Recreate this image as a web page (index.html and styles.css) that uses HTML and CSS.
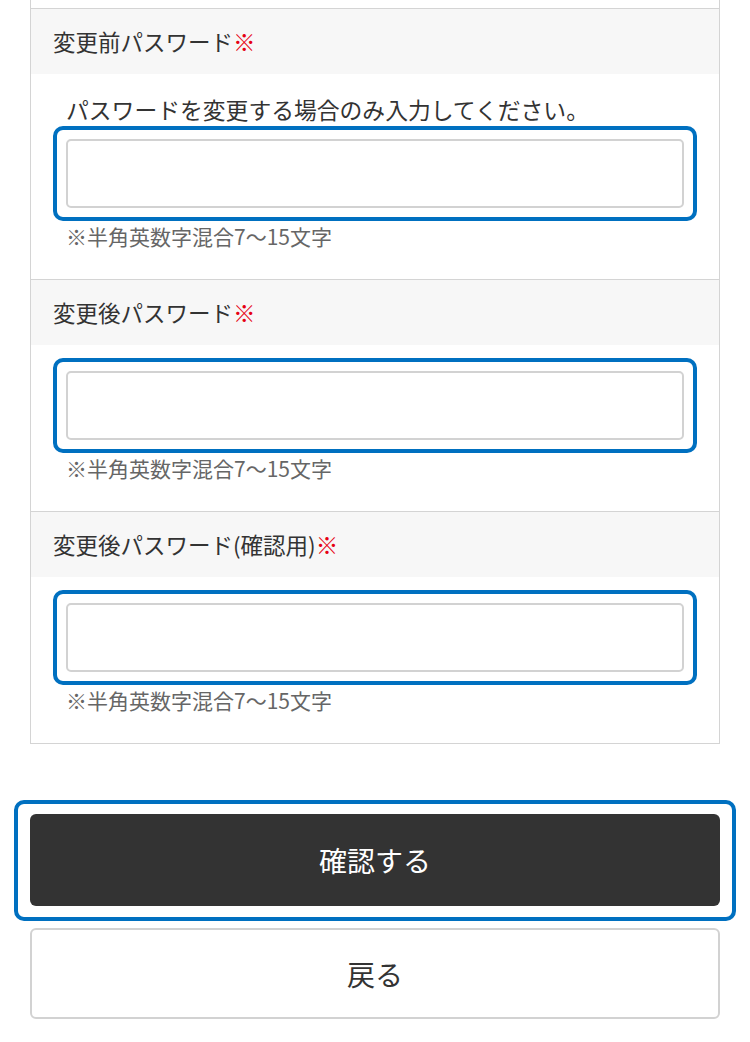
FILE: index.html
```html
<!DOCTYPE html>
<html lang="ja">
<head>
    <meta charset="UTF-8">
    <meta name="viewport" content="width=device-width, initial-scale=1.0">
    <title>パスワード変更</title>
    <link rel="stylesheet" href="styles.css">
</head>
<body>
    <div class="form-box">
        <div class="form-top"></div>

        <div class="form-item">
            <div class="form-label">変更前パスワード<span class="req">※</span></div>
            <div class="form-body">
                <p class="note">パスワードを変更する場合のみ入力してください。</p>
                <div class="focus-ring">
                    <input type="password" class="text-input">
                </div>
                <p class="hint">※半角英数字混合7〜15文字</p>
            </div>
        </div>

        <div class="form-item">
            <div class="form-label">変更後パスワード<span class="req">※</span></div>
            <div class="form-body">
                <div class="focus-ring">
                    <input type="password" class="text-input">
                </div>
                <p class="hint">※半角英数字混合7〜15文字</p>
            </div>
        </div>

        <div class="form-item">
            <div class="form-label">変更後パスワード(確認用)<span class="req">※</span></div>
            <div class="form-body">
                <div class="focus-ring">
                    <input type="password" class="text-input">
                </div>
                <p class="hint">※半角英数字混合7〜15文字</p>
            </div>
        </div>
    </div>

    <div class="actions">
        <div class="focus-ring btn-ring">
            <button class="btn btn-dark">確認する</button>
        </div>
        <button class="btn btn-light">戻る</button>
    </div>
</body>
</html>
```

FILE: styles.css
```css
:root {
    --ring: #0070c0;
    --line: #d4d4d4;
    --label-bg: #f7f7f7;
    --text: #333;
    --required: #e60012;
}

body {
    margin: 0;
    padding: 0 30px;
    background: #fff;
    color: var(--text);
    font-family: "Noto Sans CJK JP", "Noto Sans", sans-serif;
}

.form-box {
    border: 1px solid var(--line);
    border-top: none;
}

.form-top {
    height: 8px;
}

.form-item {
    border-top: 1px solid var(--line);
}

.form-label {
    height: 65px;
    line-height: 65px;
    padding: 0 22px;
    background: var(--label-bg);
    font-size: 22.5px;
}

.req {
    color: var(--required);
}

.form-body {
    padding: 26px 35px 28px;
}

.note {
    margin: -5px 0 14px;
    font-size: 22.8px;
    line-height: 30px;
    white-space: nowrap;
}

/* focus frame drawn around a field or button */
.focus-ring {
    margin: -13px;
    padding: 9px;
    border: 4px solid var(--ring);
    border-radius: 10px;
}

.text-input {
    display: block;
    box-sizing: border-box;
    width: 100%;
    height: 69px;
    margin: 0;
    border: 2px solid #d2d2d2;
    border-radius: 5px;
    background: #fff;
    font-size: 22px;
    outline: none;
}

.hint {
    margin: 13px 0 0;
    color: #666;
    font-size: 21px;
    line-height: 30px;
}

.actions {
    display: flex;
    flex-direction: column;
    gap: 22px;
    padding-top: 70px;
}

.btn-ring {
    margin: -14px -16px -15px;
    padding: 10px 12px 11px;
}

.btn {
    display: block;
    box-sizing: border-box;
    width: 100%;
    height: 92px;
    border-radius: 6px;
    font-family: inherit;
    font-size: 28px;
    cursor: pointer;
}

.btn-dark {
    border: none;
    background: #333;
    color: #fff;
    outline: none;
}

.btn-light {
    height: 91px;
    border: 2px solid #d2d2d2;
    background: #fff;
    color: var(--text);
}
```
